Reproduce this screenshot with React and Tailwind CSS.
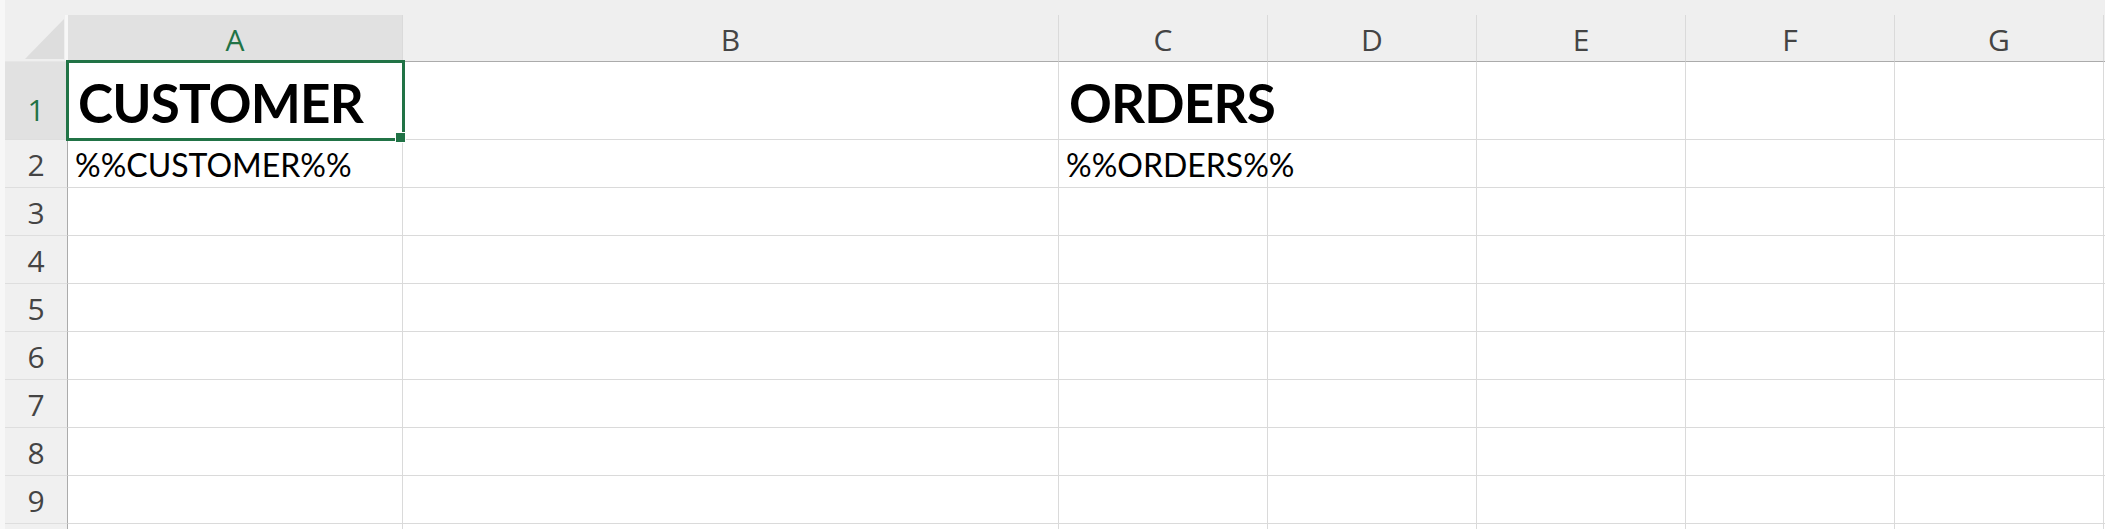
import React from "react";

const cols = [
  { label: "A", w: "w-[335px]" },
  { label: "B", w: "w-[656px]" },
  { label: "C", w: "w-[209px]" },
  { label: "D", w: "w-[209px]" },
  { label: "E", w: "w-[209px]" },
  { label: "F", w: "w-[209px]" },
  { label: "G", w: "w-[209px]" },
];

const cellFont = { fontFamily: "Lato, 'Liberation Sans', sans-serif" };
const headFont = { fontFamily: "'Open Sans', 'Liberation Sans', sans-serif" };

function RowHeader({ n, tall, selected }) {
  return (
    <div className="flex shrink-0">
      <div className="w-[5px] bg-[#f7f7f7]" />
      <div
        style={headFont}
        className={`w-[63px] flex items-end justify-center border-r border-r-[#ababab] border-b border-b-[#dedede] leading-none text-[30px] ${
          tall ? "pb-[14px]" : "pb-[7px]"
        } ${selected ? "bg-[#e1e1e1] text-[#217346]" : "bg-[#f0f0f0] text-[#444444]"}`}
      >
        {n}
      </div>
    </div>
  );
}

function Cell({ w, children, bold, tall, selected }) {
  return (
    <div
      className={`${w} shrink-0 relative flex items-end border-r border-b border-[#dadada] ${
        tall ? "pb-[10px]" : "pb-[6px]"
      }`}
    >
      {children && (
        <span
          style={cellFont}
          className={`relative z-10 whitespace-nowrap leading-none text-black ${
            bold ? "font-bold text-[53px] tracking-[-0.8px] pl-[10px]" : "text-[32px] pl-[7px]"
          }`}
        >
          {children}
        </span>
      )}
      {selected && (
        <>
          <div className="absolute z-20 -left-[2px] -top-[2px] -right-[3px] -bottom-[2px] border-[3px] border-[#217346] pointer-events-none" />
          <div className="absolute z-30 -right-[4px] -bottom-[4px] w-[11px] h-[11px] bg-[#217346] border border-white" />
        </>
      )}
    </div>
  );
}

export default function App() {
  const rows = [
    { n: 1, tall: true, cells: { A: "CUSTOMER", C: "ORDERS" }, bold: true },
    { n: 2, cells: { A: "%%CUSTOMER%%", C: "%%ORDERS%%" } },
    { n: 3, cells: {} },
    { n: 4, cells: {} },
    { n: 5, cells: {} },
    { n: 6, cells: {} },
    { n: 7, cells: {} },
    { n: 8, cells: {} },
    { n: 9, cells: {} },
    { n: "", cells: {} },
  ];

  return (
    <div className="w-[2105px] h-[529px] overflow-hidden bg-white flex flex-col">
      {/* column headers */}
      <div className="flex h-[62px] shrink-0 bg-[#efefef]">
        <div className="w-[5px] bg-[#f7f7f7]" />
        <div className="w-[63px] flex flex-col">
          <div className="h-[15px]" />
          <div className="flex-1 border-r-[3px] border-r-[#f7f7f7] border-b border-b-[#e6e6e6]">
            <svg width="60" height="46" viewBox="0 0 60 46">
              <polygon points="20,44 59,44 59,4" fill="#dddddd" />
            </svg>
          </div>
        </div>
        {cols.map((c) => (
          <div key={c.label} className={`${c.w} shrink-0 flex flex-col`}>
            <div className="h-[15px]" />
            <div
              style={headFont}
              className={`flex-1 flex items-end justify-center pb-[6px] leading-none text-[30px] border-r border-r-[#dadada] border-b border-b-[#ababab] ${
                c.label === "A" ? "bg-[#e1e1e1] text-[#217346]" : "text-[#444444]"
              }`}
            >
              {c.label}
            </div>
          </div>
        ))}
        <div className="flex-1 border-b border-b-[#ababab] mt-[15px]" />
      </div>

      {rows.map((r, i) => (
        <div key={i} className={`flex shrink-0 ${r.tall ? "h-[78px]" : "h-[48px]"}`}>
          <RowHeader n={r.n} tall={r.tall} selected={r.n === 1} />
          {cols.map((c) => (
            <Cell
              key={c.label}
              w={c.w}
              bold={r.bold}
              tall={r.tall}
              selected={r.n === 1 && c.label === "A"}
            >
              {r.cells[c.label]}
            </Cell>
          ))}
          <div className="flex-1 border-b border-[#dadada]" />
        </div>
      ))}
    </div>
  );
}
